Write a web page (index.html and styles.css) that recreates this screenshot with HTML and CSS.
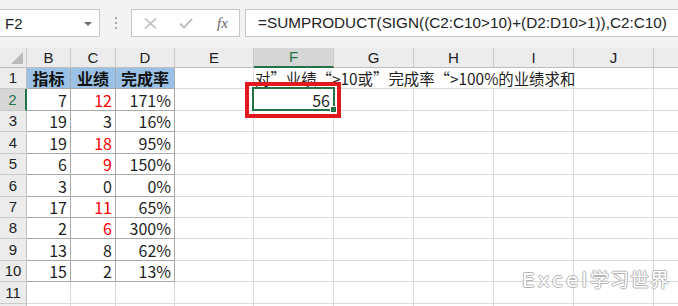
FILE: index.html
```html
<!DOCTYPE html>
<html>
<head>
    <title>SUMPRODUCT</title>
    <link rel="stylesheet" href="styles.css">
</head>
<body>

<div class="app">
    <div class="toolbar">
        <div class="namebox">F2<span class="caret"></span></div>
        <div class="grip"><i></i><i></i><i></i></div>
        <div class="fxbox">
            <svg width="13" height="11" viewBox="0 0 13 11"><path d="M1 0.5 L12 10.5 M12 0.5 L1 10.5" stroke="#bcbcbc" stroke-width="1.6" fill="none"/></svg>
            <svg width="14" height="11" viewBox="0 0 14 11"><path d="M1 5.5 L5 9.5 L13 1" stroke="#c4c4c4" stroke-width="2.2" fill="none"/></svg>
            <span class="fx">fx</span>
        </div>
        <div class="formula">=SUMPRODUCT(SIGN((C2:C10&gt;10)+(D2:D10&gt;1)),C2:C10)</div>
    </div>

    <div class="sheet">
        <div class="row head">
            <div class="corner"><span class="tri"></span></div>
            <div>B</div><div>C</div><div>D</div><div>E</div>
            <div class="sel">F</div><div>G</div><div>H</div><div>I</div><div>J</div><div></div>
        </div>
        <div class="row h21">
            <div class="rh">1</div>
            <div class="tb th">指标</div><div class="tb th">业绩</div><div class="tb th">完成率</div><div></div>
            <div class="note"><span class="txt">对<span class="qc">”</span>业绩<span class="qo">“</span>&gt;10或<span class="qc">”</span>完成率<span class="qo">“</span>&gt;100%的业绩求和</span></div><div></div>
        </div>
        <div class="row h22">
            <div class="rh sel">2</div>
            <div class="tb">7</div><div class="tb red">12</div><div class="tb">171%</div><div></div>
            <div>56</div><div></div><div></div><div></div><div></div><div></div>
        </div>
        <div class="row h21">
            <div class="rh">3</div>
            <div class="tb">19</div><div class="tb">3</div><div class="tb">16%</div><div></div>
            <div></div><div></div><div></div><div></div><div></div><div></div>
        </div>
        <div class="row h22">
            <div class="rh">4</div>
            <div class="tb">19</div><div class="tb red">18</div><div class="tb">95%</div><div></div>
            <div></div><div></div><div></div><div></div><div></div><div></div>
        </div>
        <div class="row h21">
            <div class="rh">5</div>
            <div class="tb">6</div><div class="tb red">9</div><div class="tb">150%</div><div></div>
            <div></div><div></div><div></div><div></div><div></div><div></div>
        </div>
        <div class="row h22">
            <div class="rh">6</div>
            <div class="tb">3</div><div class="tb">0</div><div class="tb">0%</div><div></div>
            <div></div><div></div><div></div><div></div><div></div><div></div>
        </div>
        <div class="row h21">
            <div class="rh">7</div>
            <div class="tb">17</div><div class="tb red">11</div><div class="tb">65%</div><div></div>
            <div></div><div></div><div></div><div></div><div></div><div></div>
        </div>
        <div class="row h21">
            <div class="rh">8</div>
            <div class="tb">2</div><div class="tb red">6</div><div class="tb">300%</div><div></div>
            <div></div><div></div><div></div><div></div><div></div><div></div>
        </div>
        <div class="row h22">
            <div class="rh">9</div>
            <div class="tb">13</div><div class="tb">8</div><div class="tb">62%</div><div></div>
            <div></div><div></div><div></div><div></div><div></div><div></div>
        </div>
        <div class="row h21">
            <div class="rh">10</div>
            <div class="tb">15</div><div class="tb">2</div><div class="tb">13%</div><div></div>
            <div></div><div></div><div></div><div></div><div></div><div></div>
        </div>
        <div class="row h22">
            <div class="rh">11</div>
            <div></div><div></div><div></div><div></div>
            <div></div><div></div><div></div><div></div><div></div><div></div>
        </div>
        <div class="row h22">
            <div class="rh"></div>
            <div></div><div></div><div></div><div></div>
            <div></div><div></div><div></div><div></div><div></div><div></div>
        </div>

        <div class="cursor"><span class="handle"></span></div>
        <div class="mark"></div>
        <div class="watermark"><span class="en">Excel</span>学习世界</div>
    </div>
</div>

</body>
</html>
```

FILE: styles.css
```css
body {
    margin: 0;
    padding: 0;
    background: #ffffff;
    overflow: hidden;
    font-family: "Liberation Sans", "Noto Sans CJK SC", sans-serif;
    color: #1f1f1f;
}
.app {
    width: 678px;
    height: 306px;
    overflow: hidden;
}

/* formula bar */
.toolbar {
    height: 48px;
    background: #f3f3f3;
    display: flex;
    align-items: flex-start;
    padding-top: 9px;
    box-sizing: border-box;
}
.namebox {
    width: 101px;
    height: 28px;
    margin-left: -1px;
    box-sizing: border-box;
    background: #fff;
    border: 1px solid #c6c6c6;
    display: flex;
    align-items: center;
    padding-left: 5px;
    font-size: 15px;
    color: #222;
    position: relative;
}
.caret {
    position: absolute;
    right: 7px;
    top: 12px;
    border-left: 4px solid transparent;
    border-right: 4px solid transparent;
    border-top: 4px solid #6e6e6e;
}
.grip {
    width: 31px;
    height: 28px;
    display: flex;
    flex-direction: column;
    align-items: center;
    justify-content: center;
    gap: 3px;
}
.grip i {
    width: 2px;
    height: 2px;
    background: #a9a9a9;
}
.fxbox {
    width: 109px;
    height: 28px;
    box-sizing: border-box;
    background: #fff;
    border: 1px solid #c6c6c6;
    display: flex;
    align-items: center;
    padding-left: 12px;
    gap: 22px;
}
.fx {
    font-family: "Liberation Serif", serif;
    font-style: italic;
    font-size: 15px;
    color: #666;
    margin-left: 2px;
}
.formula {
    flex: 1;
    height: 28px;
    margin-left: 5px;
    margin-right: -2px;
    box-sizing: border-box;
    background: #fff;
    border: 1px solid #c6c6c6;
    display: flex;
    align-items: center;
    padding-left: 12px;
    font-size: 15.3px;
    color: #222;
    white-space: nowrap;
}

/* sheet grid */
.sheet {
    position: relative;
}
.row {
    display: grid;
    grid-template-columns: 27px 44px 45px 59px 79px 80px 80px 80px 80px 80px 25px;
}
.row > div {
    box-sizing: border-box;
    border-right: 1px solid #dadada;
    border-bottom: 1px solid #dadada;
    display: flex;
    align-items: flex-end;
    justify-content: flex-end;
    padding: 0 3px 0 0;
    font-family: "Noto Sans CJK SC", sans-serif;
    font-size: 16px;
    line-height: 20px;
    white-space: nowrap;
}
.h21 { height: 21px; }
.h22 { height: 22px; }

.head {
    height: 20px;
    background: #ececec;
}
.head > div {
    justify-content: center;
    align-items: center;
    padding: 0;
    font-family: "Liberation Sans", sans-serif;
    font-size: 15px;
    line-height: 18px;
    color: #222;
    border-right-color: #cacaca;
    border-bottom-color: #bdbdbd;
}
.head > div.sel {
    background: #d6d6d6;
    color: #217346;
    border-bottom: 2px solid #217346;
}
.corner {
    position: relative;
}
.tri {
    position: absolute;
    right: 3px;
    bottom: 3px;
    border-left: 12px solid transparent;
    border-bottom: 12px solid #b9b9b9;
}

.row > .rh {
    background: #ececec;
    justify-content: center;
    align-items: center;
    padding: 0;
    font-family: "Liberation Sans", sans-serif;
    font-size: 15px;
    line-height: 18px;
    color: #222;
    border-right-color: #bdbdbd;
    border-bottom-color: #cacaca;
}
.row > .rh.sel {
    background: #d6d6d6;
    color: #217346;
    border-right: 2px solid #217346;
}

.row > .tb {
    border-right-color: #a9a9a9;
    border-bottom-color: #a9a9a9;
}
.row > .th {
    background: #9bc2e6;
    justify-content: center;
    padding: 0;
    font-weight: bold;
    color: #111;
}
.red {
    color: #ff0000;
}
.row > .note {
    grid-column: span 5;
    justify-content: flex-start;
    padding-left: 1px;
    font-size: 15.4px;
}
.txt {
    display: block;
}
.qc, .qo {
    display: inline-block;
    width: 1em;
}
.qc { text-align: left; }
.qo { text-align: right; }

/* overlays */
.cursor {
    position: absolute;
    left: 252px;
    top: 39px;
    width: 83px;
    height: 24px;
    box-sizing: border-box;
    border: 2px solid #217346;
}
.handle {
    position: absolute;
    right: -4px;
    bottom: -4px;
    width: 5px;
    height: 5px;
    background: #217346;
    border: 1px solid #fff;
}
.mark {
    position: absolute;
    left: 245px;
    top: 34px;
    width: 96px;
    height: 36px;
    box-sizing: border-box;
    border: 4px solid #e3171e;
}
.watermark {
    position: absolute;
    left: 522px;
    top: 221px;
    white-space: nowrap;
    font-family: "Noto Sans CJK SC", sans-serif;
    font-size: 19px;
    line-height: 20px;
    letter-spacing: 1px;
    color: #fff;
    text-shadow: 1px 0 0 #b5b5b5, -1px 0 0 #b5b5b5, 0 1px 0 #b5b5b5, 0 -1px 0 #b5b5b5;
}
.watermark .en {
    font-family: "DejaVu Sans", sans-serif;
    font-size: 20px;
    letter-spacing: 3px;
}
```
